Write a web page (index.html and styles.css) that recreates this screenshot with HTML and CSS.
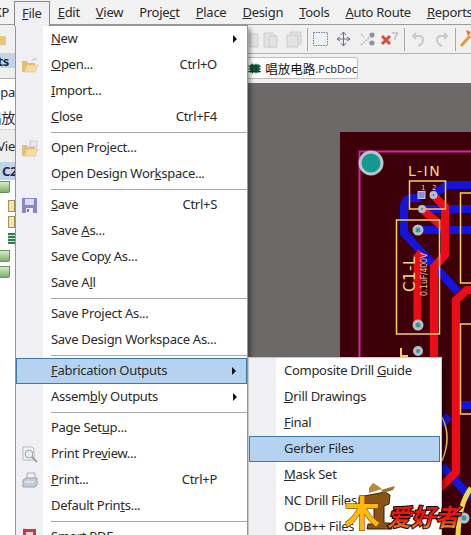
FILE: index.html
```html
<!DOCTYPE html>
<html lang="en">

<head>
    <meta charset="UTF-8">
    <meta name="viewport" content="width=device-width, initial-scale=1.0">
    <title>File menu</title>
    <link rel="stylesheet" href="styles.css">
</head>

<body>
    <div class="app">
        <div class="menubar">
            <span class="bar-item bar-xp">XP</span>
            <span class="bar-item bar-open"><u>F</u>ile</span>
            <span class="bar-item"><u>E</u>dit</span>
            <span class="bar-item"><u>V</u>iew</span>
            <span class="bar-item">Proje<u>c</u>t</span>
            <span class="bar-item"><u>P</u>lace</span>
            <span class="bar-item"><u>D</u>esign</span>
            <span class="bar-item"><u>T</u>ools</span>
            <span class="bar-item"><u>A</u>uto Route</span>
            <span class="bar-item"><u>R</u>eports</span>
        </div>

        <div class="workarea">
            <div class="sidebar">
                <div class="side-tools">
                    <svg class="side-open" width="6" height="13" viewBox="0 0 6 13"><path d="M0 4h4l2 1v8H0z" fill="#e8c878"/></svg>
                </div>
                <div class="side-head">Projects</div>
                <div class="side-gap"></div>
                <div class="side-row">Workspa</div>
                <div class="side-row side-cjk">唱放</div>
                <div class="side-tab">Vie</div>
                <div class="side-title">C2</div>
                <div class="tree">
                    <span class="tree-folder"></span>
                    <span class="tree-doc"></span>
                    <span class="tree-doc"></span>
                    <span class="tree-grid"></span>
                    <span class="tree-folder"></span>
                    <span class="tree-folder"></span>
                </div>
            </div>

            <div class="main">
                <div class="toolbar">
                    <svg width="223" height="28" viewBox="248 25 223 28">
                        <g fill="#e2e2e2" stroke="#cccccc">
                            <path d="M250 34h8v13h-8z"/>
                            <path d="M264 33h9l3 3v11h-12z"/>
                            <path d="M269 36h8v11h-8z"/>
                            <path d="M290 32h11v12h-11z"/>
                            <path d="M287 35h11v12h-11z"/>
                        </g>
                        <path d="M307.500 28v23M404.500 28v23M455.500 28v23" stroke="#a8a8a8"/>
                        <rect x="313.500" y="32.500" width="14" height="13" fill="#eef2f8" stroke="#7080a0" stroke-dasharray="1.500 1"/>
                        <path d="M343.500 32v14M337 39h13M341 35l2.500-3 2.500 3M341 43l2.500 3 2.500-3M340 37l-3 2 3 2M347 37l3 2-3 2" fill="none" stroke="#66707c"/>
                        <path d="M361 45l12-11M361 34l3 3M369 42l3 3" stroke="#c4c4c4" stroke-width="2" stroke-dasharray="2 1"/>
                        <circle cx="372" cy="35" r="2.500" fill="#8a94a4"/>
                        <circle cx="372" cy="43" r="2.500" fill="#8a94a4"/>
                        <path d="M382 36l8 8M390 36l-8 8" stroke="#d84a3a" stroke-width="3"/>
                        <path d="M392 33h6l-3 4v3" fill="none" stroke="#a0a8b4"/>
                        <path d="M413 36h6q4 0 4 4t-5 6M416 33l-3 3 3 3" fill="none" stroke="#c8c8c8" stroke-width="2"/>
                        <path d="M447 36h-6q-4 0-4 4t5 6M444 33l3 3-3 3" fill="none" stroke="#c8c8c8" stroke-width="2"/>
                        <path d="M461 46l9-10" stroke="#d8a040" stroke-width="3"/>
                        <path d="M466 30l5 2-3 4z" fill="#e86a30"/>
                    </svg>
                </div>

                <div class="tabstrip">
                    <div class="doc-tab">
                        <svg width="15" height="11" viewBox="0 0 15 11"><rect x="2" y="1" width="11" height="9" fill="#146a40"/><path d="M0 3h15M0 6h15M0 9h15M5 0v11M9 0v11" stroke="#0c3a26"/></svg>
                        <span class="doc-name">唱放电路</span><span class="doc-ext">.PcbDoc</span>
                    </div>
                </div>

                <svg class="canvas" viewBox="248 83 223 452" preserveAspectRatio="xMinYMin slice">
                    <rect x="248" y="83" width="223" height="452" fill="#6c6968"/>
                    <rect x="340" y="132" width="131" height="403" fill="#3d0009"/>
                    <path d="M359.500 535V151.500H471" fill="none" stroke="#d822a8" stroke-width="2"/>

                    <g fill="none" stroke="#1414dc" stroke-width="8">
                        <path d="M433 195l14-10h24"/>
                        <path d="M421 198h-8q-9 0-9 10v25l54 59"/>
                        <path d="M422 209h49"/>
                        <path d="M418 230h53"/>
                        <path d="M471 405h-12"/>
                        <path d="M441 425l8-9"/>
                        <path d="M442 466l29 32"/>
                    </g>
                    <g fill="none" stroke="#ec0c18" stroke-width="8">
                        <path d="M433 195l12 12v48l-11 12v268"/>
                        <path d="M422 209l23 20"/>
                        <path d="M417.500 325v-68l4-5"/>
                        <path d="M471 290h-4l-11 10v172l-16 16"/>
                    </g>

                    <g fill="none" stroke="#f5cf6a" stroke-width="1.500">
                        <rect x="409.500" y="181" width="36" height="28"/>
                        <rect x="396.500" y="220" width="43" height="114"/>
                        <path d="M472 193h-11.500v90H472"/>
                        <path d="M472 324h-11.500v90H472"/>
                        <path d="M442 417q10 20 0 44"/>
                    </g>
                    <path d="M471 488q-12 16-13 47" fill="none" stroke="#f0d848" stroke-width="5"/>

                    <circle cx="371" cy="163" r="11" fill="#129a90" stroke="#bcc2d0" stroke-width="3"/>
                    <g fill="#2c9aa0" stroke="#b8bcc4" stroke-width="3">
                        <circle cx="433.500" cy="195" r="2.500"/>
                        <circle cx="418" cy="230" r="4"/>
                        <circle cx="418" cy="325" r="4"/>
                        <circle cx="418" cy="351" r="3.500"/>
                        <circle cx="422" cy="209" r="2.500" fill="#8a6a5a"/>
                        <circle cx="464" cy="518" r="4"/>
                    </g>
                    <rect x="418" y="191.500" width="7" height="7" fill="#8a90d8" stroke="#c0c4e8"/>

                    <text x="408" y="176" class="pcb-label">L-IN</text>
                    <text x="421" y="190" class="pcb-tiny">1</text>
                    <text x="432" y="190" class="pcb-tiny">2</text>
                    <text transform="translate(415 292) rotate(-90)" class="pcb-label pcb-big">C1-L</text>
                    <text transform="translate(427 296) rotate(-90)" class="pcb-small">0.1uF/400V</text>
                    <path d="M401 348v8h7" fill="none" stroke="#f5cf6a" stroke-width="2"/>
                </svg>
            </div>
        </div>

        <div class="menu menu-file">
            <div class="item"><span class="slot"></span><span class="label"><u>N</u>ew</span><span class="arrow"></span></div>
            <div class="item">
                <span class="slot"><svg width="18" height="16" viewBox="0 0 18 16"><path d="M1 4h5l1 2h7v9H1z" fill="#e0c078"/><path d="M3 15l3-7h11l-3 7z" fill="#f4dc9c" stroke="#d8b870" stroke-width=".5"/><path d="M10 4l3-3 4 1-3 1z" fill="#c4ccd4"/></svg></span>
                <span class="label"><u>O</u>pen...</span><span class="keys">Ctrl+O</span>
            </div>
            <div class="item"><span class="slot"></span><span class="label"><u>I</u>mport...</span></div>
            <div class="item"><span class="slot"></span><span class="label"><u>C</u>lose</span><span class="keys">Ctrl+F4</span></div>
            <div class="sep"></div>
            <div class="item">
                <span class="slot"><svg width="18" height="17" viewBox="0 0 18 17"><path d="M1 5h5l1 2h7v9H1z" fill="#e0c078"/><path d="M3 16l3-7h11l-3 7z" fill="#f4dc9c" stroke="#d8b870" stroke-width=".5"/><path d="M9 1h7v6H9z" fill="#e8e8ec" stroke="#a8a8b0" stroke-width=".5"/></svg></span>
                <span class="label">Open Pro<u>j</u>ect...</span>
            </div>
            <div class="item"><span class="slot"></span><span class="label">Open Design Wor<u>k</u>space...</span></div>
            <div class="sep"></div>
            <div class="item">
                <span class="slot"><svg width="15" height="15" viewBox="0 0 15 15"><path d="M0 0h15v15H0z" fill="#8888c8"/><path d="M3 1h9v6H3z" fill="#dcdcf0"/><path d="M4 10h7v5H4z" fill="#f0f0f8"/><path d="M5 11h2v3H5z" fill="#7070b0"/></svg></span>
                <span class="label"><u>S</u>ave</span><span class="keys">Ctrl+S</span>
            </div>
            <div class="item"><span class="slot"></span><span class="label">Save <u>A</u>s...</span></div>
            <div class="item"><span class="slot"></span><span class="label">Save Cop<u>y</u> As...</span></div>
            <div class="item"><span class="slot"></span><span class="label">Save A<u>l</u>l</span></div>
            <div class="sep"></div>
            <div class="item"><span class="slot"></span><span class="label">Save Project As...</span></div>
            <div class="item"><span class="slot"></span><span class="label">Save Design Workspace As...</span></div>
            <div class="sep"></div>
            <div class="item item-on"><span class="slot"></span><span class="label"><u>F</u>abrication Outputs</span><span class="arrow"></span></div>
            <div class="item"><span class="slot"></span><span class="label">Assem<u>b</u>ly Outputs</span><span class="arrow"></span></div>
            <div class="sep"></div>
            <div class="item"><span class="slot"></span><span class="label">Page Set<u>u</u>p...</span></div>
            <div class="item">
                <span class="slot"><svg width="17" height="17" viewBox="0 0 17 17"><path d="M2 1h9l2 2v11H2z" fill="#f4f4f4" stroke="#b8b8b8"/><circle cx="8" cy="8" r="4" fill="#e4ecf4" stroke="#9aa4b0"/><path d="M11 11l5 5" stroke="#a0a0a0" stroke-width="2"/></svg></span>
                <span class="label">Print Pre<u>v</u>iew...</span>
            </div>
            <div class="item">
                <span class="slot"><svg width="16" height="16" viewBox="0 0 16 16"><path d="M5 1h8v6H5z" fill="#f0f0f4" stroke="#a8b0bc"/><path d="M1 8l3-2h11v7l-2 2H1z" fill="#c4ccd8" stroke="#98a0ac"/><path d="M3 10h9" stroke="#f4f4f4"/></svg></span>
                <span class="label"><u>P</u>rint...</span><span class="keys">Ctrl+P</span>
            </div>
            <div class="item"><span class="slot"></span><span class="label">Default Prin<u>t</u>s...</span></div>
            <div class="sep"></div>
            <div class="item">
                <span class="slot"><svg width="16" height="16" viewBox="0 0 16 16"><path d="M1 0h13v16H1z" fill="#c8384a"/><path d="M4 3h7v3H4z" fill="#f0d0d4"/></svg></span>
                <span class="label">Smart PDF...</span>
            </div>
        </div>

        <div class="menu menu-sub">
            <div class="item"><span class="slot"></span><span class="label">Composite Drill <u>G</u>uide</span></div>
            <div class="item"><span class="slot"></span><span class="label"><u>D</u>rill Drawings</span></div>
            <div class="item"><span class="slot"></span><span class="label"><u>F</u>inal</span></div>
            <div class="item item-on"><span class="slot"></span><span class="label">Gerber Files</span></div>
            <div class="item"><span class="slot"></span><span class="label"><u>M</u>ask Set</span></div>
            <div class="item"><span class="slot"></span><span class="label">NC Drill Files</span></div>
            <div class="item"><span class="slot"></span><span class="label">ODB++ Files</span></div>
        </div>

        <svg class="logo" width="120" height="60" viewBox="0 0 120 60">
            <defs>
                <linearGradient id="logo-fill" x1="0" y1="0" x2="0" y2="1">
                    <stop offset="0" stop-color="#e81818"/>
                    <stop offset=".6" stop-color="#e81818"/>
                    <stop offset="1" stop-color="#f4c020"/>
                </linearGradient>
            </defs>
            <path d="M14 20l26-5 5 3-1 9-5 2v17h6l2 6H22l1-5h6V30l-15-3z" fill="#8a5418" stroke="#3c2008"/>
            <path d="M24 11l4-5 5 3 4 3-13 4z" fill="#b88a38"/>
            <path d="M36 13l14-4-2 4-10 3z" fill="#9c7430"/>
            <text x="-1" y="50" class="logo-mu">木</text>
            <text x="42" y="49" class="logo-name">爱好者</text>
        </svg>
    </div>
</body>

</html>
```

FILE: styles.css
```css
html,
body {
    margin: 0;
    height: 100%;
    overflow: hidden;
    background-color: #f0f0f0;
}

.app {
    position: relative;
    display: flex;
    flex-direction: column;
    width: 471px;
    height: 535px;
    overflow: hidden;
    font-family: "Noto Sans", "Noto Sans CJK SC", sans-serif;
    font-size: 13px;
    letter-spacing: -0.28px;
    color: #2a2a2a;
}

.menubar {
    display: flex;
    flex: none;
    height: 25px;
    margin-left: -8px;
    white-space: nowrap;
    background-color: #f2f2f2;
    border-bottom: 1px solid #9a9a9a;
    box-sizing: border-box;
}

.bar-item {
    flex: none;
    padding: 0 8px;
    line-height: 25px;
}

.bar-xp {
    width: 17px;
    padding: 0 5px 0 0;
    text-align: right;
}

.bar-open {
    position: relative;
    z-index: 3;
    height: 25px;
    margin-top: 1px;
    line-height: 23px;
    background-color: #f0f0f4;
    border: 1px solid #8a8a8a;
    border-bottom: none;
    box-sizing: border-box;
    padding: 0 7px;
}

.workarea {
    display: flex;
    flex: 1;
    min-height: 0;
}

/* left panel, nearly all of it under the menu */
.sidebar {
    display: flex;
    flex: none;
    flex-direction: column;
    width: 15px;
    overflow: hidden;
    background-color: #fff;
    white-space: nowrap;
}

.side-tools {
    display: flex;
    align-items: flex-end;
    flex: none;
    height: 28px;
    padding-bottom: 8px;
    box-sizing: border-box;
    background-color: #f0f0f0;
}

.side-head,
.side-row,
.side-tab,
.side-title {
    display: flex;
    flex: none;
    justify-content: flex-end;
    align-items: center;
}

.side-head {
    height: 15px;
    padding-right: 6px;
    font-weight: bold;
    background-color: #c6d4e4;
    color: #1c2c40;
}

.side-gap {
    flex: none;
    height: 10px;
    background-color: #f0f0f0;
    border-bottom: 1px solid #b0b0b0;
}

.side-row {
    height: 25px;
    background-color: #fff;
}

.side-cjk {
    font-size: 14px;
    border-bottom: 1px dashed #c8c8c8;
}

.side-tab {
    height: 32px;
    background-color: #efefef;
}

.side-title {
    height: 18px;
    justify-content: flex-start;
    padding-left: 2px;
    font-weight: bold;
    background-color: #c4d4e8;
    color: #1c2c50;
}

.tree {
    display: flex;
    flex-direction: column;
    align-items: flex-start;
    padding-top: 1px;
}

.tree-folder {
    width: 10px;
    height: 12px;
    margin-bottom: 4px;
    background: linear-gradient(#d8ecc8, #7cb070);
    border: 1px solid #6a9060;
    border-left: none;
    border-radius: 0 0 2px 0;
    box-sizing: border-box;
}

.tree-doc {
    width: 7px;
    height: 12px;
    margin: 3px 0 1px 8px;
    background-color: #f4e4a8;
    border: 1px solid #a09060;
    box-sizing: border-box;
}

.tree-doc + .tree-folder,
.tree-grid + .tree-folder {
    margin-top: 3px;
}

.tree-grid {
    width: 7px;
    height: 11px;
    margin: 4px 0 3px 8px;
    background: repeating-linear-gradient(#3a7a50 0 2px, #c8e0d0 2px 3px);
}

.main {
    display: flex;
    flex: 1;
    flex-direction: column;
    min-width: 0;
    padding-left: 233px;
}

.toolbar {
    flex: none;
    height: 28px;
    border-bottom: 1px solid #b4b4b4;
}

.toolbar svg {
    display: block;
}

.tabstrip {
    flex: none;
    height: 29px;
    padding-top: 3px;
    box-sizing: border-box;
}

.doc-tab {
    display: flex;
    align-items: center;
    gap: 4px;
    width: 110px;
    height: 22px;
    box-sizing: border-box;
    background-color: #fdfdfd;
    border: 1px solid #c0c0c0;
    border-left: none;
    border-radius: 0 3px 3px 0;
    white-space: nowrap;
    letter-spacing: 0;
}

.doc-name {
    font-size: 12.5px;
    color: #111;
}

.doc-ext {
    margin-left: -4px;
    font-size: 11px;
}

.canvas {
    display: block;
    flex: 1;
    width: 223px;
    min-height: 0;
}

.pcb-label {
    font-family: "DejaVu Sans", sans-serif;
    font-size: 14px;
    letter-spacing: 1.5px;
    fill: #f6d488;
}

.pcb-big {
    font-size: 15px;
    letter-spacing: 0.5px;
}

.pcb-tiny {
    font-family: "DejaVu Sans", sans-serif;
    font-size: 7px;
    fill: #f6d488;
}

.pcb-small {
    font-family: "DejaVu Sans", sans-serif;
    font-size: 8px;
    fill: #e8c8a0;
}

/* dropdowns lie over the panes */
.menu {
    position: absolute;
    z-index: 2;
    box-sizing: border-box;
    background: linear-gradient(90deg, #f0f0f4 27px, #fff 27px);
    border: 1px solid #979797;
    box-shadow: 3px 3px 4px rgba(0, 0, 0, 0.35);
}

.menu-file {
    left: 15px;
    top: 25px;
    width: 233px;
}

.menu-sub {
    left: 248px;
    top: 357px;
    width: 194px;
    border-color: #c8c8c8;
}

.item {
    display: flex;
    align-items: center;
    height: 26px;
    box-sizing: border-box;
    white-space: nowrap;
}

.item-on {
    background-color: #b5d3f0;
    border: 1px solid #3c78a8;
}

.menu-sub .item-on {
    margin-right: 1px;
}

.slot {
    display: flex;
    flex: none;
    justify-content: center;
    align-items: center;
    width: 27px;
    margin-right: 8px;
}

.item-on .slot {
    margin-left: -1px;
}

.label {
    flex: 1;
    margin-top: -2px;
}

.keys {
    margin-top: -2px;
}

.menu-file .keys {
    padding-right: 30px;
}

.arrow {
    flex: none;
    width: 0;
    height: 0;
    margin-right: 10px;
    border-left: 4px solid #111;
    border-top: 4px solid transparent;
    border-bottom: 4px solid transparent;
}

.sep {
    height: 1px;
    margin: 2px 0 2px 35px;
    background-color: #a8a8a8;
}

.logo {
    position: absolute;
    z-index: 4;
    left: 345px;
    top: 477px;
    letter-spacing: 0;
}

.logo-mu {
    font-family: "Noto Sans CJK SC", sans-serif;
    font-size: 36px;
    font-weight: bold;
    fill: #ffb80c;
    stroke: #5a3808;
    stroke-width: 1;
    paint-order: stroke;
}

.logo-name {
    font-family: "Noto Sans CJK SC", sans-serif;
    font-size: 24px;
    font-weight: bold;
    font-style: italic;
    fill: url(#logo-fill);
    stroke: #140404;
    stroke-width: 2;
    paint-order: stroke;
}
```
